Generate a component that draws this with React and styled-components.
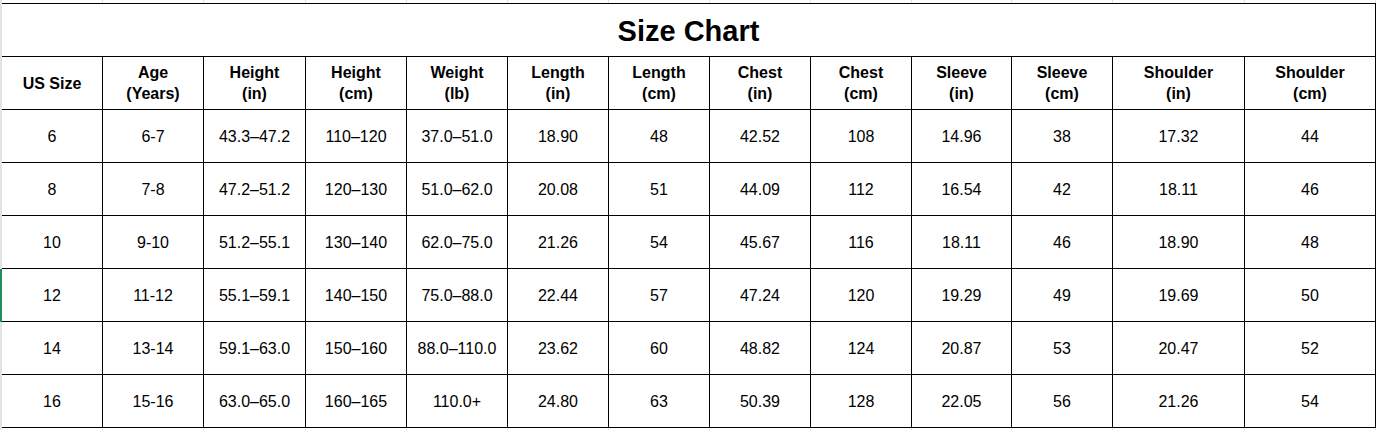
import React from 'react';
import styled, { createGlobalStyle } from 'styled-components';

const COLS = [101, 101, 102, 101, 101, 101, 101, 101, 101, 100, 101, 132, 131];

const HEADERS = [
  ['US Size'],
  ['Age', '(Years)'],
  ['Height', '(in)'],
  ['Height', '(cm)'],
  ['Weight', '(lb)'],
  ['Length', '(in)'],
  ['Length', '(cm)'],
  ['Chest', '(in)'],
  ['Chest', '(cm)'],
  ['Sleeve', '(in)'],
  ['Sleeve', '(cm)'],
  ['Shoulder', '(in)'],
  ['Shoulder', '(cm)'],
];

const ROWS = [
  ['6', '6-7', '43.3–47.2', '110–120', '37.0–51.0', '18.90', '48', '42.52', '108', '14.96', '38', '17.32', '44'],
  ['8', '7-8', '47.2–51.2', '120–130', '51.0–62.0', '20.08', '51', '44.09', '112', '16.54', '42', '18.11', '46'],
  ['10', '9-10', '51.2–55.1', '130–140', '62.0–75.0', '21.26', '54', '45.67', '116', '18.11', '46', '18.90', '48'],
  ['12', '11-12', '55.1–59.1', '140–150', '75.0–88.0', '22.44', '57', '47.24', '120', '19.29', '49', '19.69', '50'],
  ['14', '13-14', '59.1–63.0', '150–160', '88.0–110.0', '23.62', '60', '48.82', '124', '20.87', '53', '20.47', '52'],
  ['16', '15-16', '63.0–65.0', '160–165', '110.0+', '24.80', '63', '50.39', '128', '22.05', '56', '21.26', '54'],
];

const GlobalStyle = createGlobalStyle`
  html, body {
    margin: 0;
    padding: 0;
    background: #fff;
  }
  body {
    font-family: "Liberation Sans", Arial, sans-serif;
    color: #000;
  }
`;

const Sheet = styled.div`
  display: grid;
  grid-template-columns: 2px ${COLS.map(w => `${w}px`).join(' ')} 1fr;
  grid-template-rows: 3px 54px repeat(7, 53px) 3px;
  width: 1380px;
  height: 430px;
  overflow: hidden;
`;

const Gutter = styled.div`
  background: ${props => (props.$active ? '#1d8f5c' : '#e3e3e3')};
`;

const Ghost = styled.div`
  border-right: 1px solid #e2e2e2;
  box-sizing: border-box;
`;

const Title = styled.div`
  grid-column: 2 / span 13;
  display: flex;
  align-items: center;
  justify-content: center;
  border-top: 1px solid #000;
  border-bottom: 1px solid #000;
  border-right: 1px solid #000;
  box-sizing: border-box;
  font-size: 29px;
  font-weight: bold;
  padding-top: 3px;
`;

const Cell = styled.div`
  display: flex;
  flex-direction: column;
  align-items: center;
  justify-content: center;
  border-right: 1px solid #000;
  border-bottom: 1px solid #000;
  box-sizing: border-box;
  font-size: 16px;
  line-height: 21px;
  font-weight: ${props => (props.$head ? 'bold' : 'normal')};
  text-align: center;
  white-space: nowrap;
`;

const Blank = styled.div``;

const GhostRow = () => (
  <>
    <Gutter />
    {COLS.map((w, i) => (
      <Ghost key={i} />
    ))}
    <Blank />
  </>
);

const App = () => {
  return (
    <>
      <GlobalStyle />
      <Sheet>
        <GhostRow />

        <Gutter />
        <Title>Size Chart</Title>
        <Blank />

        <Gutter />
        {HEADERS.map((lines, i) => (
          <Cell key={i} $head>
            {lines.map(l => (
              <span key={l}>{l}</span>
            ))}
          </Cell>
        ))}
        <Blank />

        {ROWS.map(row => (
          <React.Fragment key={row[0]}>
            <Gutter $active={row[0] === '12'} />
            {row.map((v, i) => (
              <Cell key={i}>{v}</Cell>
            ))}
            <Blank />
          </React.Fragment>
        ))}

        <GhostRow />
      </Sheet>
    </>
  );
};

export default App;
